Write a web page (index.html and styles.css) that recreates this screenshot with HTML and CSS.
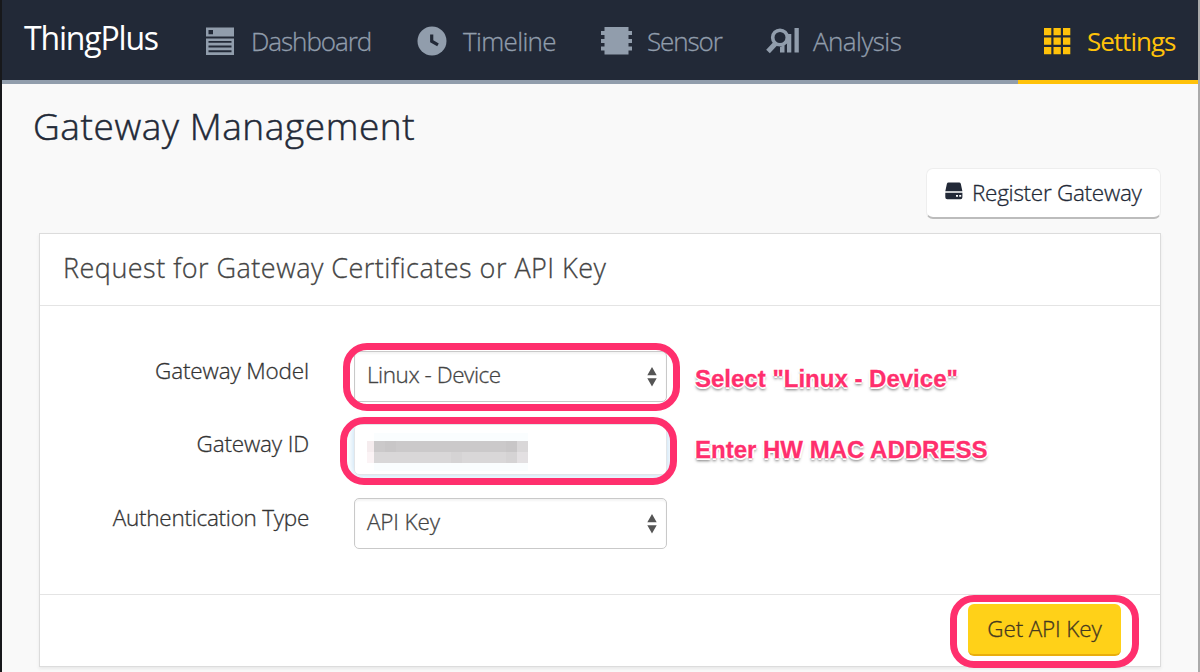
FILE: index.html
```
<!DOCTYPE html>
<html lang="en">
<head>
<meta charset="utf-8">
<title>ThingPlus - Gateway Management</title>
<link rel="stylesheet" href="styles.css">
</head>
<body>
<div class="window">
  <header class="topbar">
    <span class="brand">ThingPlus</span>
    <nav class="nav">
      <a class="nav-item dashboard"><svg width="30" height="30" viewBox="0 0 30 30"><path fill="#919dac" d="M1 1.500h28v9H1zM1 12.500h28v16.500H1z"/><path fill="#222937" d="M3.500 4h4.500v4.300H3.500zM3.500 15h23v1.800h-23zM3.500 19.600h23v2h-23zM3.500 24.200h23v2h-23z"/></svg><span>Dashboard</span></a>
      <a class="nav-item timeline"><svg width="30" height="30" viewBox="0 0 30 30"><circle cx="15" cy="15" r="14.500" fill="#919dac"/><path d="M14.700 8.500v6.700l6.300 3.600" fill="none" stroke="#222937" stroke-width="3.200"/></svg><span>Timeline</span></a>
      <a class="nav-item sensor"><svg width="32" height="30" viewBox="0 0 32 30"><path fill="#919dac" d="M4.500 1h24v4H32v4h-3.500v4H32v4h-3.500v3.500H32v4h-3.500v4h-24v-4H1v-4h3.500V17H1v-4h3.500V9H1V5h3.500z"/></svg><span>Sensor</span></a>
      <a class="nav-item analysis"><svg width="34" height="30" viewBox="0 0 34 30"><g fill="none" stroke="#919dac"><circle cx="14" cy="11.500" r="7.300" stroke-width="3.600"/><path d="M9.500 17.500L2 25.500" stroke-width="5"/></g><path fill="#919dac" d="M14 21l4.500-2v7.500H14zM21 8h4.300v18.500H21zM28.500 2h4.300v24.500h-4.300zM19.500 17l2-3v4z"/></svg><span>Analysis</span></a>
    </nav>
    <a class="nav-item settings"><svg width="28" height="28" viewBox="0 0 28 28" fill="#ffc20a"><path d="M1 1h7.300v7.300H1zM10.500 1h7.300v7.300h-7.300zM20 1h7.300v7.300H20zM1 10.500h7.300v7.300H1zM10.500 10.500h7.300v7.300h-7.300zM20 10.500h7.300v7.300H20zM1 20h7.300v7.300H1zM10.500 20h7.300v7.300h-7.300zM20 20h7.300v7.300H20z"/></svg><span>Settings</span></a>
  </header>
  <main class="content">
    <h1 class="title"><span>Gateway Management</span></h1>
    <div class="actions">
      <button class="register"><svg width="18" height="18" viewBox="0 0 18 18"><path fill="#222937" d="M3.500.5h10.600q1.300 0 1.700 1.300L17.400 9.200H.3L1.900 1.800Q2.300.5 3.500.5zM.3 10.700h17.100v4.500q0 2-2 2H2.300q-2 0-2-2z"/><path fill="#fff" d="M11 13h2v1.800h-2zM14.200 13h2v1.800h-2z"/></svg><span>Register Gateway</span></button>
    </div>
    <section class="panel">
      <h2 class="panel-head"><span>Request for Gateway Certificates or API Key</span></h2>
      <div class="form">
        <div class="row">
          <label class="label l-model">Gateway Model</label>
          <div class="control select"><span class="v-model">Linux - Device</span><svg width="10" height="20" viewBox="0 0 10 20"><path fill="#555" d="M5 0l4.700 8.300H.3zM.3 11.300h9.400L5 19.500z"/></svg><i class="ring ring-model"></i></div>
          <strong class="note n-select">Select "Linux - Device"</strong>
        </div>
        <div class="row">
          <label class="label l-id">Gateway ID</label>
          <div class="control input"><svg class="mosaic" width="162" height="38" viewBox="0 0 162 38" shape-rendering="crispEdges"><path fill="#fafdfe" d="M7 0h154v38H7z"/><path fill="#f5ecee" d="M0 8h7v11H0z"/><path fill="#fbf3f5" d="M0 19h7v11H0z"/><path fill="#cbc9ca" d="M7 8h143v11H7z"/><path fill="#d9d7d8" d="M7 19h143v11H7z"/><path fill="#c8c6c7" d="M18 8h11v11H18zM139 8h11v11h-11z"/><path fill="#d5d3d4" d="M84 19h11v11H84zM139 19h11v11h-11z"/><path fill="#d9d7d8" d="M150 8h11v11h-11z"/><path fill="#e3e0e2" d="M150 19h11v11h-11z"/></svg><i class="ring ring-id"></i></div>
          <strong class="note n-enter">Enter HW MAC ADDRESS</strong>
        </div>
        <div class="row row-auth">
          <label class="label l-auth">Authentication Type</label>
          <div class="control select"><span class="v-api">API Key</span><svg width="10" height="20" viewBox="0 0 10 20"><path fill="#555" d="M5 0l4.700 8.300H.3zM.3 11.300h9.400L5 19.500z"/></svg></div>
        </div>
      </div>
      <footer class="panel-foot"><button class="get-key"><span>Get API Key</span><i class="ring ring-key"></i></button></footer>
    </section>
  </main>
</div>
</body>
</html>
```
FILE: styles.css
```
* { box-sizing: border-box; }
body { margin: 0; background: #f9f9f9; font-family: "Open Sans", "Noto Sans", sans-serif; font-weight: 300; overflow: hidden; -webkit-text-stroke: 0.3px currentColor; }
.window { width: 1200px; height: 672px; border-left: 2px solid #17181b; border-right: 2px solid #ababab; background: #f9f9f9; overflow: hidden; }
button { font: inherit; margin: 0; padding: 0; }
svg { display: block; flex: none; }
span, label, strong { white-space: nowrap; }
.topbar { display: flex; height: 84px; background: #222937; color: #919dac; font-size: 26px; line-height: 80px; }
.brand { width: 203px; padding-left: 22px; height: 84px; border-bottom: 4px solid #919dac; color: #fff; font-size: 32px; line-height: 76px; font-weight: 400; letter-spacing: -1.180px; -webkit-text-stroke: 0; }
.nav { flex: 1; display: flex; height: 84px; border-bottom: 4px solid #919dac; }
.nav-item { display: flex; align-items: center; height: 80px; }
.nav-item svg { margin-top: 1px; }
.nav-item span { padding-top: 1px; }
.dashboard { width: 212px; gap: 16px; letter-spacing: -1.050px; }
.timeline { width: 183px; gap: 16px; letter-spacing: -0.650px; }
.sensor { width: 166px; gap: 15px; letter-spacing: -1.100px; }
.analysis { gap: 13px; letter-spacing: -0.550px; }
.settings { width: 180px; height: 84px; padding-left: 25px; gap: 16px; border-bottom: 4px solid #ffc20a; color: #ffc20a; font-weight: 400; letter-spacing: -1px; -webkit-text-stroke: 0; }
.content { padding: 0 37px; }
.title { margin: 0 0 0 -6px; height: 84px; font-size: 37px; line-height: 83px; font-weight: 300; color: #222937; letter-spacing: 0.580px; -webkit-text-stroke: 0.500px; }
.actions { display: flex; justify-content: flex-end; height: 65px; }
.register { display: flex; align-items: center; gap: 9px; width: 235px; height: 51px; padding: 0 0 2px 18px; border: 1px solid #eee; border-bottom: 2px solid #bcbcbc; border-radius: 7px; background: #fff; color: #222937; font-size: 22.500px; letter-spacing: -0.280px; }
.register svg { margin-top: -2px; }
.panel { width: 1122px; height: 434px; background: #fff; border: 1px solid #dcdcdc; box-shadow: 0 2px 3px #e9e9e9; }
.panel-head { margin: 0; height: 72px; padding-left: 23px; border-bottom: 1px solid #e4e4e4; font-size: 27px; line-height: 68px; font-weight: 300; color: #444; letter-spacing: 0.480px; }
.form { height: 288px; padding-top: 45px; display: flex; flex-direction: column; gap: 22px; }
.row { display: grid; grid-template-columns: 269px 313px 1fr; column-gap: 45px; height: 51px; }
.row-auth { margin-top: 1px; }
.label { text-align: right; line-height: 39px; font-size: 22.500px; color: #333; letter-spacing: -0.150px; }
.l-auth { letter-spacing: -0.270px; }
.control { position: relative; display: flex; align-items: center; justify-content: space-between; height: 51px; padding: 0 9px 0 12px; border: 1px solid #c9c9c9; border-radius: 5px; font-size: 22.500px; line-height: 45px; color: #444; box-shadow: inset 0 2px 2px #f4f4f4; }
.control span { height: 49px; }
.v-model { letter-spacing: -0.450px; }
.v-api { letter-spacing: -0.150px; }
.input { border-color: #e2e5e8; box-shadow: 0 0 9px #b4d8f1; }
.mosaic { margin-top: 5px; }
.ring { position: absolute; border: 7px solid #ff2f6d; border-radius: 24px; pointer-events: none; }
.ring-model { left: -12px; top: -9px; width: 337px; height: 68px; }
.ring-id { left: -15px; top: -8px; width: 337px; height: 68px; }
.ring-key { left: -18px; top: -9px; width: 189px; height: 73px; }
.note { margin-left: -17px; color: #ff2f6d; font: bold 24px/56px "Liberation Sans", Arial, sans-serif; text-shadow: -2px 0 #fff, 2px 0 #fff, 0 2px #fff, 0 -2px #fff, 0 3px 3px #777; }
.n-enter { line-height: 51px; }
.panel-foot { height: 72px; border-top: 1px solid #e4e4e4; display: flex; justify-content: flex-end; padding: 9px 39px 0 0; }
.get-key { position: relative; width: 153px; height: 52px; padding-bottom: 1px; border: 0; border-bottom: 2px solid #e9ae0d; border-radius: 6px; background: #ffd118; color: #443820; font-size: 22.500px; letter-spacing: -0.150px; }
```
